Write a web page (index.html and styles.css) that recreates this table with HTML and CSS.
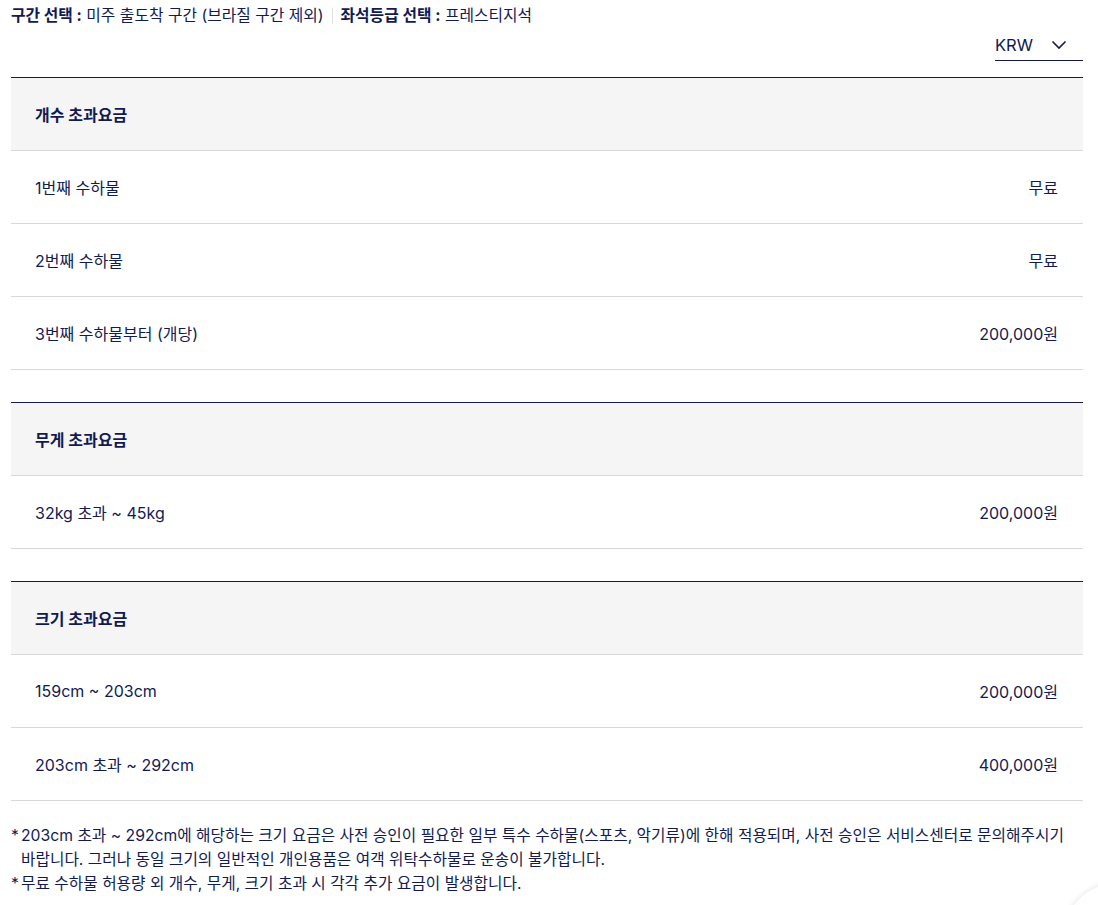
FILE: index.html
```html
<!DOCTYPE html>
<html lang="ko">
<head>
<meta charset="utf-8">
<link rel="stylesheet" href="styles.css">
</head>
<body>
<div class="page">
  <div class="filters">
    <span class="filter"><b>구간 선택 :</b> 미주 출도착 구간 (브라질 구간 제외)</span>
    <span class="sep"></span>
    <span class="filter"><b>좌석등급 선택 :</b> 프레스티지석</span>
  </div>
  <div class="currency-row">
    <div class="currency">
      <span>KRW</span>
      <svg class="chev" width="16" height="10" viewBox="0 0 16 10"><path d="M1.5 1.5 L8 8 L14.5 1.5" fill="none" stroke="#121a52" stroke-width="1.6"/></svg>
    </div>
  </div>

  <section class="fee-table">
    <div class="head">개수 초과요금</div>
    <div class="row"><span>1번째 수하물</span><span>무료</span></div>
    <div class="row"><span>2번째 수하물</span><span>무료</span></div>
    <div class="row"><span>3번째 수하물부터 (개당)</span><span>200,000원</span></div>
  </section>

  <section class="fee-table">
    <div class="head">무게 초과요금</div>
    <div class="row"><span>32kg 초과 ~ 45kg</span><span>200,000원</span></div>
  </section>

  <section class="fee-table">
    <div class="head">크기 초과요금</div>
    <div class="row"><span>159cm ~ 203cm</span><span>200,000원</span></div>
    <div class="row"><span>203cm 초과 ~ 292cm</span><span>400,000원</span></div>
  </section>

  <ul class="notes">
    <li>203cm 초과 ~ 292cm에 해당하는 크기 요금은 사전 승인이 필요한 일부 특수 수하물(스포츠, 악기류)에 한해 적용되며, 사전 승인은 서비스센터로 문의해주시기 바랍니다. 그러나 동일 크기의 일반적인 개인용품은 여객 위탁수하물로 운송이 불가합니다.</li>
    <li>무료 수하물 허용량 외 개수, 무게, 크기 초과 시 각각 추가 요금이 발생합니다.</li>
  </ul>
</div>
<div class="fab"></div>
</body>
</html>
```

FILE: styles.css
```css
* { box-sizing: border-box; }
html, body { margin: 0; padding: 0; background: #fff; }
body {
  font-family: Inter, "Noto Sans CJK KR", sans-serif;
  color: #121a52;
  overflow: hidden;
  height: 905px;
  position: relative;
}
.page {
  width: 1072px;
  margin-left: 11px;
}
.filters {
  display: flex;
  align-items: center;
  height: 32px;
  font-size: 15.8px;
  line-height: 32px;
}
.filter b { font-weight: 700; }
.sep {
  display: inline-block;
  width: 1px;
  height: 16px;
  background: #e2e2e2;
  margin: 0 8px;
}
.currency-row {
  display: flex;
  justify-content: flex-end;
}
.currency {
  width: 88px;
  height: 29px;
  border-bottom: 1px solid #121a52;
  display: flex;
  justify-content: space-between;
  align-items: center;
  font-size: 16.5px;
  padding-bottom: 2px;
}
.chev { margin-right: 16px; }
.fee-table {
  margin-top: 16px;
  border-top: 1px solid #121a52;
}
.fee-table + .fee-table { margin-top: 32px; }
.head {
  height: 73px;
  background: #f5f5f5;
  border-bottom: 1px solid #d8d8d8;
  display: flex;
  align-items: center;
  padding: 0 24px;
  font-size: 16px;
  font-weight: 700;
}
.row {
  height: 73px;
  border-bottom: 1px solid #d8d8d8;
  display: flex;
  align-items: center;
  justify-content: space-between;
  padding: 0 25px 0 24px;
  font-size: 16px;
}
.notes {
  list-style: none;
  margin: 23px 0 0;
  padding: 0;
  font-size: 15.73px;
  line-height: 24px;
  word-break: keep-all;
}
.notes li {
  padding-left: 10px;
  position: relative;
}
.notes li::before {
  content: "*";
  position: absolute;
  left: 0;
  top: 0;
}
.fab {
  position: absolute;
  right: -75px;
  bottom: -88px;
  width: 110px;
  height: 110px;
  border-radius: 50%;
  background: #fff;
  box-shadow: 0 0 6px rgba(0,0,0,0.12);
}
```
